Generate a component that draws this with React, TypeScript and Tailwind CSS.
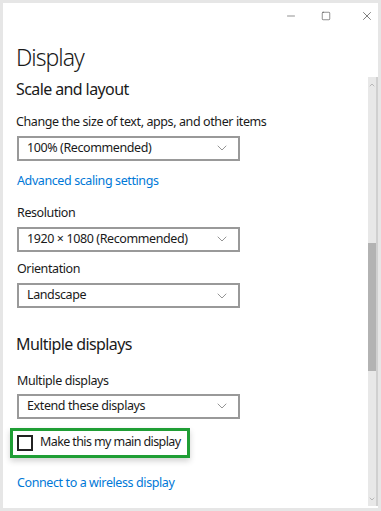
import { Minus, Square, X, ChevronDown, ChevronUp } from "lucide-react";

const font = { fontFamily: '"Segoe UI", "Noto Sans", sans-serif' };

function Dropdown({ label }: { label: string }) {
  return (
    <div className="w-[223px] h-[25px] border-2 border-[#999999] flex items-center justify-between pl-[8px] pr-[8px] text-[12.5px] tracking-[-0.4px] text-[#1a1a1a] leading-none">
      <span>{label}</span>
      <ChevronDown size={16} strokeWidth={1.2} className="text-[#7a7a7a]" />
    </div>
  );
}

export default function App() {
  return (
    <div className="w-[381px] h-[511px] bg-[#e6e6e6] p-[3px]" style={font}>
      <div className="w-full h-full bg-white flex flex-col">
        {/* title bar */}
        <div className="h-[22px] flex justify-end items-center text-[#222] pt-[4px]">
          <div className="w-[30px] flex justify-center">
            <Minus size={12} strokeWidth={1} />
          </div>
          <div className="w-[30px] flex justify-center ml-[5px]">
            <Square size={10} strokeWidth={1.2} />
          </div>
          <div className="w-[30px] flex justify-center ml-[11px] -mr-[4px]">
            <X size={14} strokeWidth={1} />
          </div>
        </div>

        <div className="flex flex-1">
          <div className="flex-1 pl-[13px] text-[#1a1a1a] tracking-[-0.4px]">
            <h1 className="text-[23px] font-light leading-none mt-[21px] tracking-[-1px]">Display</h1>
            <h2 className="text-[16px] leading-none mt-[12px] tracking-[-0.6px]">Scale and layout</h2>
            <p className="text-[12.5px] leading-none mt-[19px]">Change the size of text, apps, and other items</p>
            <div className="mt-[7px] ml-[1px]">
              <Dropdown label="100% (Recommended)" />
            </div>
            <p className="text-[12.5px] leading-none mt-[14px] ml-[1px] text-[#0078d7]">Advanced scaling settings</p>
            <p className="text-[12.5px] leading-none mt-[20px] ml-[1px]">Resolution</p>
            <div className="mt-[7px] ml-[1px]">
              <Dropdown label="1920 × 1080 (Recommended)" />
            </div>
            <p className="text-[12.5px] leading-none mt-[11px] ml-[1px]">Orientation</p>
            <div className="mt-[8px] ml-[1px]">
              <Dropdown label="Landscape" />
            </div>
            <h2 className="text-[16px] leading-none mt-[28px] tracking-[-0.6px]">Multiple displays</h2>
            <p className="text-[12.5px] leading-none mt-[23px] ml-[1px]">Multiple displays</p>
            <div className="mt-[6px] ml-[1px]">
              <Dropdown label="Extend these displays" />
            </div>
            <div className="mt-[9px] -ml-[6px] w-[180px] h-[30px] border-[3px] border-[#1f9e35] flex items-center pl-[4px] shadow-[0_3px_6px_rgba(0,0,0,0.18)] whitespace-nowrap">
              <div className="w-[16px] h-[16px] border-2 border-[#222] shrink-0" />
              <span className="text-[12.5px] leading-none ml-[7px] tracking-[-0.6px]">Make this my main display</span>
            </div>
            <p className="text-[12.5px] leading-none mt-[19px] ml-[1px] text-[#0078d7]">Connect to a wireless display</p>
          </div>

          {/* scrollbar */}
          <div className="w-[10px] mt-[52px] mb-[2px] bg-[#e8e8e8] border-r-2 border-[#d0d0d0] flex flex-col items-center">
            <ChevronUp size={8} strokeWidth={1.5} className="text-[#888] mt-[4px]" />
            <div className="w-full h-[154px]" />
            <div className="w-full h-[128px] bg-[#b3b3b3]" />
            <div className="flex-1" />
            <ChevronDown size={8} strokeWidth={1.5} className="text-[#888] mb-[3px]" />
          </div>
        </div>
      </div>
    </div>
  );
}
